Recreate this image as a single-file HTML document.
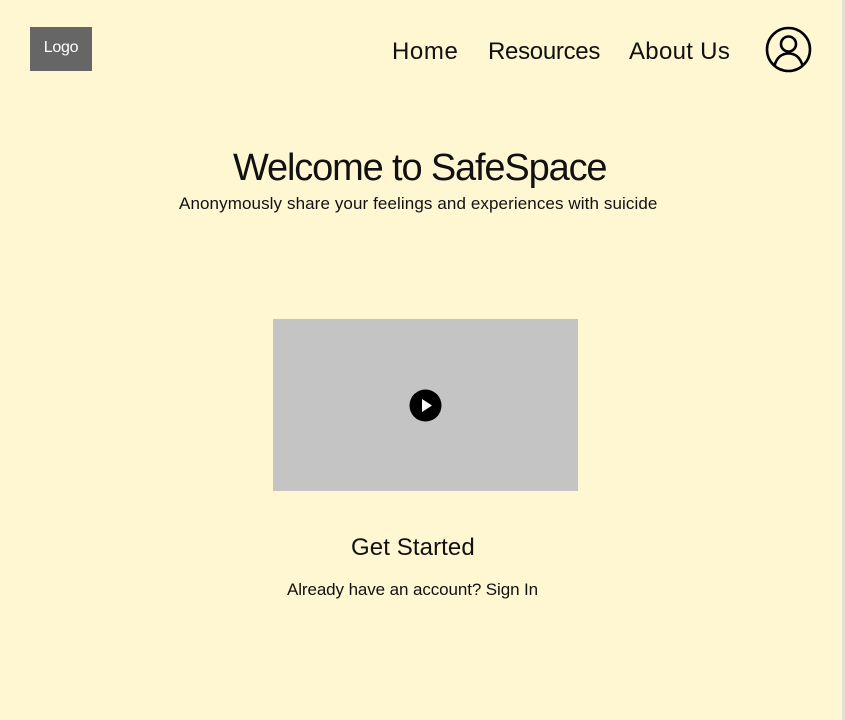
<!DOCTYPE html>
<html><head><style>
html,body{margin:0;padding:0}
body{width:845px;height:720px;background:#fff6d2;position:relative;overflow:hidden;font-family:"Liberation Sans",sans-serif;color:#111}
.edge{position:absolute;right:0;top:0;width:3px;height:720px;background:#e2e0d8}
.t{position:absolute;white-space:nowrap;line-height:1}
.logo{position:absolute;left:30px;top:27px;width:62px;height:44px;background:#666;color:#fff;font-size:16px;text-align:center;line-height:41px;letter-spacing:-0.3px}
.vid{position:absolute;left:273px;top:319px;width:305px;height:172px;background:#c4c4c4}
</style></head><body>
<div class="edge"></div>
<div class="logo">Logo</div>
<div class="t" style="left:392px;top:40px;font-size:24px;letter-spacing:0.6px">Home</div>
<div class="t" style="left:488px;top:40px;font-size:24px;letter-spacing:-0.3px">Resources</div>
<div class="t" style="left:629px;top:40px;font-size:24px;letter-spacing:0.3px">About Us</div>
<svg style="position:absolute;left:765px;top:26px" width="47" height="47" viewBox="0 0 47 47" fill="none" stroke="#000" stroke-width="2.6">
<circle cx="23.5" cy="23.5" r="21.5"/>
<circle cx="23.5" cy="18" r="7.5"/>
<path d="M9.5 39.5 C12 31 17 27.5 23.5 27.5 C30 27.5 35 31 37.5 39.5"/>
</svg>
<div class="t" style="left:233px;top:149px;font-size:38px;letter-spacing:-1.15px">Welcome to SafeSpace</div>
<div class="t" style="left:179px;top:195px;font-size:17px;letter-spacing:0.1px">Anonymously share your feelings and experiences with suicide</div>
<div class="vid"></div>
<svg style="position:absolute;left:409px;top:389px" width="33" height="33" viewBox="0 0 33 33"><circle cx="16.5" cy="16.5" r="16" fill="#000"/><path d="M13 10 L23 16.5 L13 23Z" fill="#fff"/></svg>
<div class="t" style="left:351px;top:536px;font-size:24px;letter-spacing:0.1px">Get Started</div>
<div class="t" style="left:287px;top:581px;font-size:17px;letter-spacing:-0.1px">Already have an account? Sign In</div>
</body></html>
